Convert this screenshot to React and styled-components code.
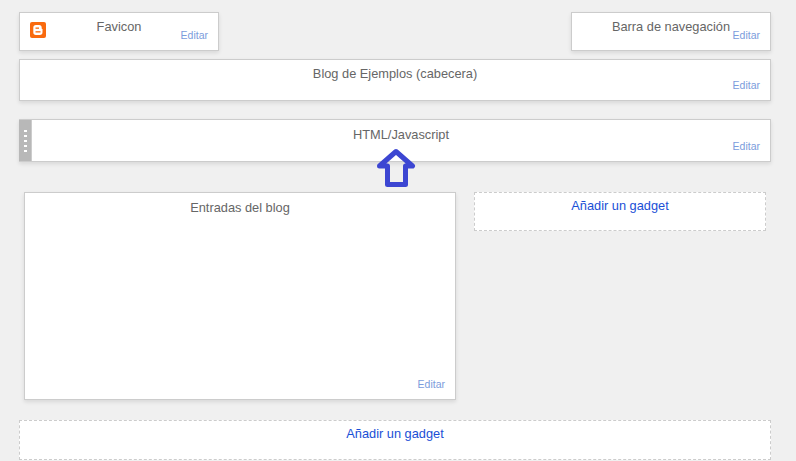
import React from 'react'
import styled, { createGlobalStyle } from 'styled-components'

const Global = createGlobalStyle`
  html, body { margin: 0; padding: 0; background: #f0f0f0; }
  body { font-family: "Liberation Sans", Arial, sans-serif; }
`

const Page = styled.div`
  position: relative;
  width: 752px;
  height: 449px;
  padding: 12px 25px 0 19px;
  overflow: hidden;
`

const Row = styled.div`
  display: flex;
  justify-content: space-between;
`

const Card = styled.div`
  display: grid;
  box-sizing: border-box;
  width: ${(props) => props.w || '100%'};
  height: ${(props) => props.h || '42px'};
  margin-top: ${(props) => props.top || '0'};
  padding: ${(props) => props.pad || '6px 10px 9px 10px'};
  background: #fff;
  border: 1px solid #cccccc;
  box-shadow: 0 2px 4px rgba(0, 0, 0, 0.1);
  & > * { grid-area: 1 / 1; }
`

const Title = styled.div`
  justify-self: center;
  align-self: start;
  margin-top: ${(props) => props.top || '0'};
  font-size: 12.8px;
  line-height: 16px;
  color: #666666;
`

const Editar = styled.a`
  justify-self: end;
  align-self: end;
  font-size: 10.5px;
  line-height: 12px;
  color: #7b9cdc;
`

const Drag = styled.div`
  display: flex;
  flex-direction: column;
  justify-content: center;
  gap: 3px;
  align-items: center;
  flex: 0 0 12px;
  background: #b8b8b8;
  border-right: 1px solid #cccccc;
  span {
    width: 3px;
    height: 2px;
    background: #fff;
  }
`

const DragCard = styled.div`
  display: flex;
  height: 43px;
  margin-top: 18px;
  background: #fff;
  border: 1px solid #cccccc;
  border-left: 0;
  box-sizing: border-box;
  box-shadow: 0 2px 4px rgba(0, 0, 0, 0.1);
`

const DragBody = styled.div`
  flex: 1;
  display: grid;
  padding: 6px 10px 9px 10px;
  & > * { grid-area: 1 / 1; }
`

const Columns = styled.div`
  display: flex;
  justify-content: space-between;
  margin: 30px 5px 0 5px;
  align-items: flex-start;
`

const Gadget = styled.div`
  box-sizing: border-box;
  width: ${(props) => props.w || '100%'};
  height: ${(props) => props.h || '40px'};
  margin-top: ${(props) => props.top || '0'};
  padding-top: 5px;
  background: #fff;
  border: 1px dashed #cccccc;
  text-align: center;
  font-size: 12.8px;
  line-height: 16px;
  color: #1a4fd6;
`

const Logo = styled.svg`
  justify-self: start;
  align-self: center;
  width: 16px;
  height: 16px;
`

const Arrow = styled.svg`
  position: absolute;
  left: 377px;
  top: 148px;
  width: 39px;
  height: 40px;
`

function BloggerLogo() {
  return (
    <Logo viewBox="0 0 16 16">
      <rect width="16" height="16" rx="2" fill="#f96a0e" />
      <path d="M6 3h3a2.7 2.7 0 0 1 2.7 2.7v.8c0 .4.4.6.8.6v3.2a2.7 2.7 0 0 1-2.7 2.7H6a2.7 2.7 0 0 1-2.7-2.7V5.700a2.7 2.700 0 0 1 2.700-2.700z" fill="#fff" />
      <rect x="5.500" y="5.500" width="3.500" height="1.300" fill="#f96a0e" />
      <rect x="5.500" y="9.200" width="5" height="1.300" fill="#f96a0e" />
    </Logo>
  )
}

export default function App() {
  return (
    <Page>
      <Global />
      <Row>
        <Card w="200px" h="39px">
          <BloggerLogo />
          <Title>Favicon</Title>
          <Editar>Editar</Editar>
        </Card>
        <Card w="200px" h="39px">
          <Title>Barra de navegación</Title>
          <Editar>Editar</Editar>
        </Card>
      </Row>
      <Card top="8px">
        <Title>Blog de Ejemplos (cabecera)</Title>
        <Editar>Editar</Editar>
      </Card>
      <DragCard>
        <Drag>
          <span />
          <span />
          <span />
          <span />
          <span />
        </Drag>
        <DragBody>
          <Title top="1px">HTML/Javascript</Title>
          <Editar>Editar</Editar>
        </DragBody>
      </DragCard>
      <Arrow viewBox="0 0 39 40">
        <path d="M19 3.500 L35.500 18 H28.500 V36.500 H10.500 V18 H2.500 Z" fill="none" stroke="#3c46d2" strokeWidth="5" strokeLinejoin="round" />
      </Arrow>
      <Columns>
        <Card w="432px" h="208px">
          <Title top="1px">Entradas del blog</Title>
          <Editar>Editar</Editar>
        </Card>
        <Gadget w="292px" h="39px">Añadir un gadget</Gadget>
      </Columns>
      <Gadget top="20px">Añadir un gadget</Gadget>
    </Page>
  )
}
